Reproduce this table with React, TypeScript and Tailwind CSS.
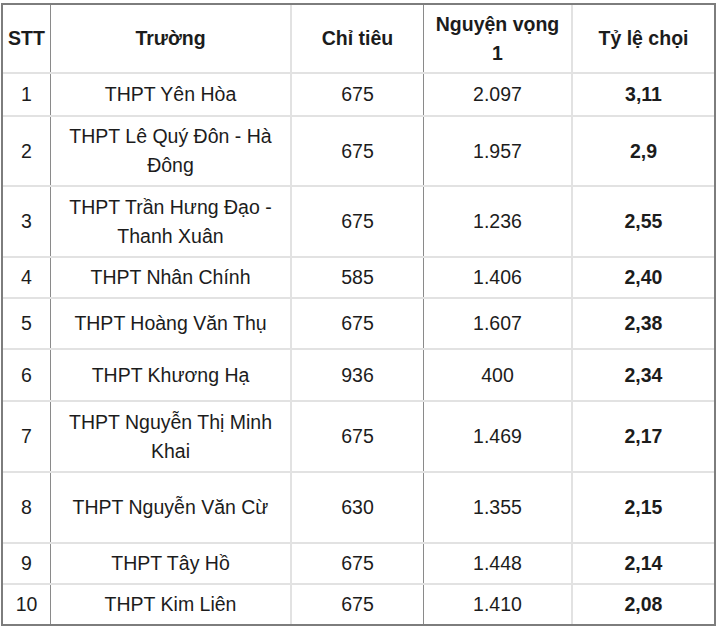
import React from 'react';

interface Row {
  stt: string;
  school: string;
  quota: string;
  first: string;
  ratio: string;
  h: string;
}

const rows: Row[] = [
  { stt: '1', school: 'THPT Yên Hòa', quota: '675', first: '2.097', ratio: '3,11', h: 'h-[43px]' },
  { stt: '2', school: 'THPT Lê Quý Đôn - Hà Đông', quota: '675', first: '1.957', ratio: '2,9', h: 'h-[70px]' },
  { stt: '3', school: 'THPT Trần Hưng Đạo - Thanh Xuân', quota: '675', first: '1.236', ratio: '2,55', h: 'h-[71px]' },
  { stt: '4', school: 'THPT Nhân Chính', quota: '585', first: '1.406', ratio: '2,40', h: 'h-[41px]' },
  { stt: '5', school: 'THPT Hoàng Văn Thụ', quota: '675', first: '1.607', ratio: '2,38', h: 'h-[51px]' },
  { stt: '6', school: 'THPT Khương Hạ', quota: '936', first: '400', ratio: '2,34', h: 'h-[52px]' },
  { stt: '7', school: 'THPT Nguyễn Thị Minh Khai', quota: '675', first: '1.469', ratio: '2,17', h: 'h-[71px]' },
  { stt: '8', school: 'THPT Nguyễn Văn Cừ', quota: '630', first: '1.355', ratio: '2,15', h: 'h-[71px]' },
  { stt: '9', school: 'THPT Tây Hồ', quota: '675', first: '1.448', ratio: '2,14', h: 'h-[41px]' },
  { stt: '10', school: 'THPT Kim Liên', quota: '675', first: '1.410', ratio: '2,08', h: 'h-[39px]' },
];

const cell = 'flex items-center justify-center text-center px-2';

const App: React.FC = () => {
  return (
    <div className="w-[720px] h-[628px] bg-white pt-[3px] pl-[1px] font-['Liberation_Sans',Arial,sans-serif] text-[19.5px] leading-[29px] text-[#1c1c1c]">
      <div className="w-[715px] border-2 border-[#7d7d7d]">
        <div className="flex h-[69px] border-b-2 border-[#e2e2e2] font-bold">
          <div className={`${cell} w-[48px] border-r border-[#8a8a8a] px-0`}>STT</div>
          <div className={`${cell} w-[241px] border-r-2 border-[#e2e2e2]`}>Trường</div>
          <div className={`${cell} w-[132px] border-r border-[#8a8a8a]`}>Chỉ tiêu</div>
          <div className={`${cell} w-[149px] border-r-2 border-[#e2e2e2]`}>Nguyện vọng 1</div>
          <div className={`${cell} flex-1`}>Tỷ lệ chọi</div>
        </div>
        {rows.map((r, i) => (
          <div
            key={r.stt}
            className={`flex ${r.h} ${i < rows.length - 1 ? 'border-b-2 border-[#e2e2e2]' : ''}`}
          >
            <div className={`${cell} w-[48px] border-r border-[#8a8a8a] px-0`}>{r.stt}</div>
            <div className={`${cell} w-[241px] border-r-2 border-[#e2e2e2] px-4`}>{r.school}</div>
            <div className={`${cell} w-[132px] border-r border-[#8a8a8a]`}>{r.quota}</div>
            <div className={`${cell} w-[149px] border-r-2 border-[#e2e2e2]`}>{r.first}</div>
            <div className={`${cell} flex-1 font-bold`}>{r.ratio}</div>
          </div>
        ))}
      </div>
    </div>
  );
};

export default App;
